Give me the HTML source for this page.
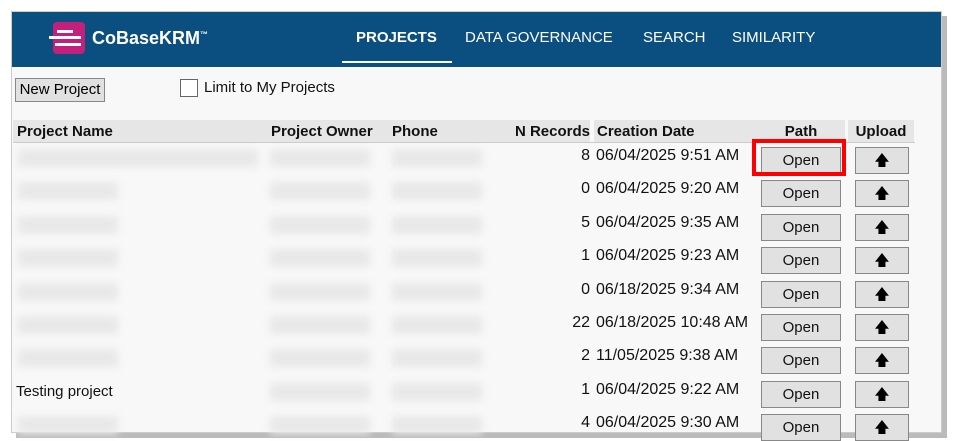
<html><head><style>
body{margin:0;width:954px;height:440px;background:#fff;font-family:"Liberation Sans",sans-serif;position:relative;overflow:hidden}
.frame{position:absolute;left:11px;top:11px;width:929px;height:420px;background:#f8f8f8;border:1px solid #ccc;box-shadow:5px 5px 0 #bbb}
.hdr{position:absolute;left:0;top:0;width:929px;height:55px;background:#0b4f80}
.nav{position:absolute;top:17px;color:#fff;font-size:15px}
.a{position:absolute;font-size:15px;color:#111}
.d{position:absolute;font-size:16px;color:#111}
.th{position:absolute;top:108px;height:22px;background:#e6e6e6;font-weight:bold;font-size:15px;line-height:23px;color:#111}
.blur{position:absolute;background:#e8e8e8;filter:blur(4px);height:18px}
.btn{position:absolute;width:78px;height:25px;background:#e1e1e1;border:1px solid #888;font-size:15px;text-align:center;line-height:25px;color:#111}
.up{position:absolute;width:52px;height:25px;background:#e1e1e1;border:1px solid #888;text-align:center;line-height:25px;font-size:15px}
</style></head><body>
<div class="frame">
<div class="hdr">
<div style="position:absolute;left:41px;top:10px;width:32px;height:32px;background:#c2207a;border-radius:4px"></div>
<div style="position:absolute;left:45px;top:18px;width:16px;height:3px;background:#fff"></div>
<div style="position:absolute;left:37px;top:24px;width:32px;height:3px;background:#fff"></div>
<div style="position:absolute;left:43px;top:31px;width:26px;height:3px;background:#fff"></div>
<div style="position:absolute;left:80px;top:16px;color:#fff;font-weight:bold;font-size:18px">CoBaseKRM<sup style="font-size:8px">™</sup></div>
<div class="nav" style="left:344px;font-weight:bold">PROJECTS</div>
<div style="position:absolute;left:330px;top:49px;width:110px;height:2px;background:#fff"></div>
<div class="nav" style="left:453px">DATA GOVERNANCE</div>
<div class="nav" style="left:631px">SEARCH</div>
<div class="nav" style="left:720px">SIMILARITY</div>
</div>
<div style="position:absolute;left:3px;top:66px;width:88px;height:22px;background:#e1e1e1;border:1px solid #888;font-size:15px;line-height:22px;text-align:center">New Project</div>
<div style="position:absolute;left:168px;top:67px;width:16px;height:16px;background:#fff;border:1px solid #666"></div>
<div class="a" style="left:192px;top:67px">Limit to My Projects</div>
<div class="th" style="left:1px;width:252px;padding-left:4px">Project Name</div>
<div class="th" style="left:256px;width:118px;padding-left:3px">Project Owner</div>
<div class="th" style="left:377px;width:116px;padding-left:3px">Phone</div>
<div class="th" style="left:495px;width:83px;text-align:right">N Records</div>
<div class="th" style="left:582px;width:160px;padding-left:3px">Creation Date</div>
<div class="th" style="left:745px;width:88px;text-align:center">Path</div>
<div class="th" style="left:836px;width:66px;text-align:center">Upload</div>
<div style="position:absolute;left:1px;top:130px;width:902px;height:1px;background:#ccc"></div>
<div id="rows"></div>
</div>
<div style="position:absolute;left:752px;top:139px;width:94px;height:37px;border:4px solid #f00;box-sizing:border-box"></div>
<script>
var d=[["8","06/04/2025 9:51 AM"],["0","06/04/2025 9:20 AM"],["5","06/04/2025 9:35 AM"],["1","06/04/2025 9:23 AM"],["0","06/18/2025 9:34 AM"],["22","06/18/2025 10:48 AM"],["2","11/05/2025 9:38 AM"],["1","06/04/2025 9:22 AM"],["4","06/04/2025 9:30 AM"]];
var h="";d.forEach(function(r,i){var y=133+i*33.4;
if(i!=7)h+='<div class="blur" style="left:6px;top:'+(y+4)+'px;width:'+(i==0?240:100)+'px"></div>';
else h+='<div class="a" style="left:4px;top:'+(y+4)+'px">Testing project</div>';
h+='<div class="blur" style="left:258px;top:'+(y+4)+'px;width:100px"></div><div class="blur" style="left:380px;top:'+(y+4)+'px;width:90px"></div>';
h+='<div class="d" style="left:495px;width:83px;text-align:right;top:'+(y+2)+'px">'+r[0]+'</div><div class="d" style="left:584px;top:'+(y+2)+'px">'+r[1]+'</div>';
h+='<div class="btn" style="left:749px;top:'+(y+2)+'px">Open</div><div class="up" style="left:843px;top:'+(y+2)+'px">&#129093;</div>';});
document.getElementById("rows").innerHTML=h;
</script>
</body></html>
